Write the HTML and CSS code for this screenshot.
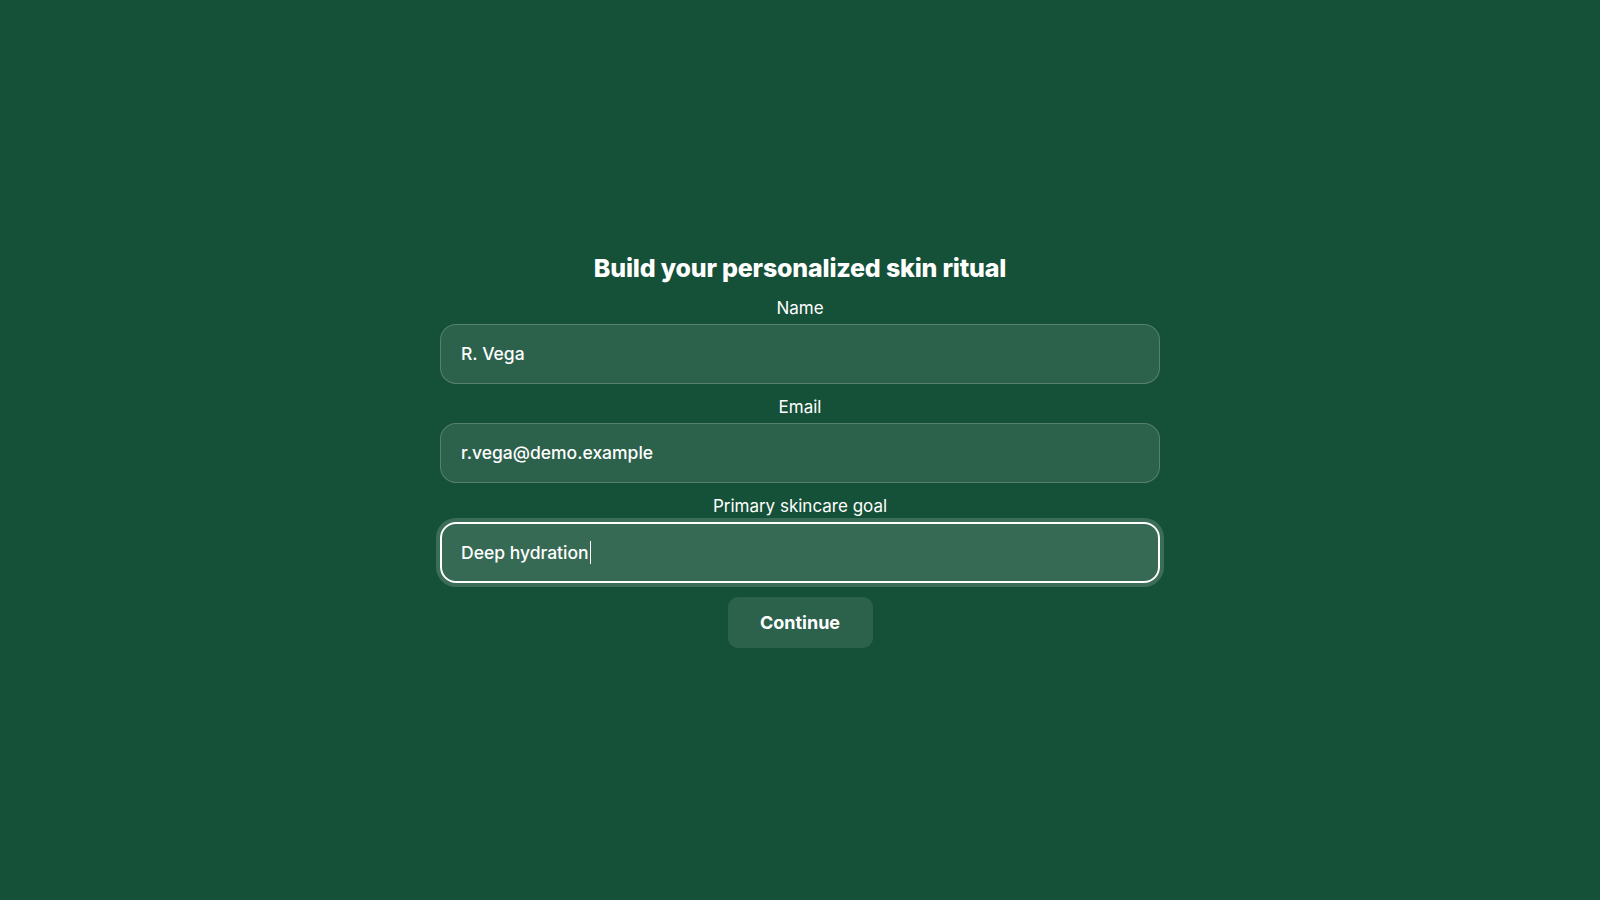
FILE: index.html
```html
<!DOCTYPE html>
<html lang="en">
<head>
<meta charset="utf-8">
<title>Build your personalized skin ritual</title>
<link rel="stylesheet" href="styles.css">
</head>
<body>
<main class="page">
  <form class="form">
    <h1 class="title">Build your personalized skin ritual</h1>
    <div class="field">
      <label class="label">Name</label>
      <div class="input">R. Vega</div>
    </div>
    <div class="field">
      <label class="label">Email</label>
      <div class="input">r.vega@demo.example</div>
    </div>
    <div class="field">
      <label class="label">Primary skincare goal</label>
      <div class="input input--focus">Deep hydration<span class="caret"></span></div>
    </div>
    <button type="button" class="button">Continue</button>
  </form>
</main>
</body>
</html>
```
FILE: styles.css
```css
* { box-sizing: border-box; }
html, body { margin: 0; height: 100%; }
body {
  background: #155038;
  color: #ffffff;
  font-family: Inter, "Liberation Sans", sans-serif;
}
.page {
  height: 100%;
  display: flex;
  align-items: center;
  justify-content: center;
}
.form {
  width: 720px;
  display: flex;
  flex-direction: column;
  align-items: center;
  gap: 13px;
}
.title {
  margin: 0 0 2px;
  font-size: 25px;
  line-height: 30px;
  font-weight: 800;
  letter-spacing: -0.2px;
}
.field {
  width: 100%;
  display: flex;
  flex-direction: column;
  align-items: center;
  gap: 6px;
}
.label {
  font-size: 17px;
  line-height: 20px;
  font-weight: 400;
}
.input {
  width: 100%;
  height: 60px;
  display: flex;
  align-items: center;
  padding: 0 20px;
  border: 1px solid rgba(255, 255, 255, 0.2);
  border-radius: 16px;
  background: rgba(255, 255, 255, 0.1);
  font-size: 17.5px;
  font-weight: 500;
}
.input--focus {
  border: 2px solid #ffffff;
  padding: 0 19px;
  height: 61px;
  background: rgba(255, 255, 255, 0.15);
  box-shadow: 0 0 0 4px rgba(255, 255, 255, 0.17);
}
.caret {
  display: inline-block;
  width: 1.5px;
  height: 23px;
  margin-left: 1px;
  background: #ffffff;
}
.button {
  margin-top: 1px;
  width: 145px;
  height: 51px;
  border: none;
  border-radius: 10px;
  background: rgba(255, 255, 255, 0.1);
  color: #ffffff;
  font-family: inherit;
  font-size: 18px;
  font-weight: 700;
}
```
